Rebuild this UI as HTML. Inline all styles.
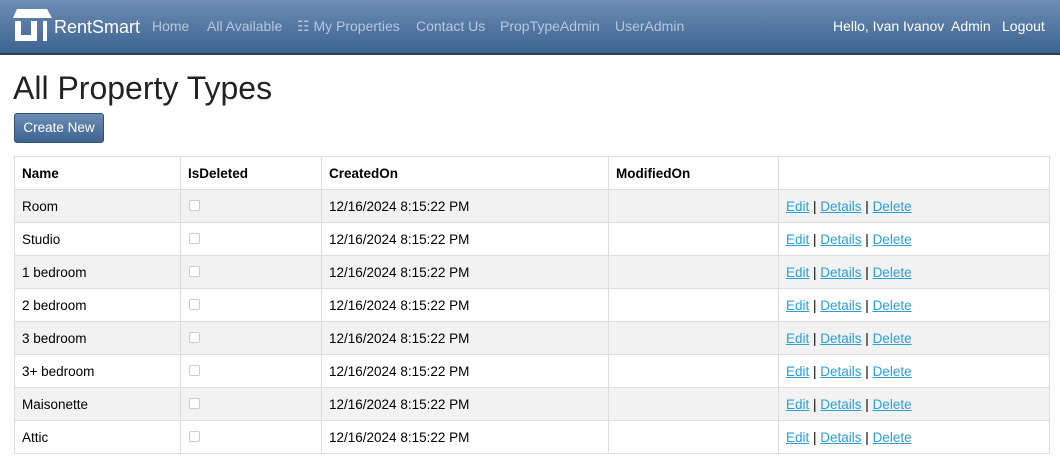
<!DOCTYPE html>
<html><head><style>
body{margin:0;background:#fff;font-family:"Liberation Sans",sans-serif;color:#000;width:1060px;height:472px;overflow:hidden}
.nav{height:53px;background:linear-gradient(#6c8db4,#3d6391);border-bottom:2px solid #2e3e52;position:relative;color:#fff}
.nav a{position:absolute;top:18px;font-size:14px;color:#b8c7da;text-decoration:none}
.nav .r{color:#fff}
h1{position:absolute;left:13px;top:70px;margin:0;font-weight:normal;font-size:32px;color:#222}
.btn{position:absolute;left:14px;top:113px;width:88px;height:28px;border:1px solid #2f5079;border-radius:3px;background:linear-gradient(#6c8db4,#3d6391);color:#fff;font-size:13.5px;line-height:28px;text-align:center}
table{position:absolute;left:14px;top:156px;border-collapse:collapse;width:1036px;font-size:13.5px}
td,th{border:1px solid #ddd;height:32px;padding:0 7px;text-align:left;vertical-align:middle}
th{font-weight:bold}
tr:nth-child(even) td{background:#f2f2f2}
.cb{display:inline-block;width:9px;height:9px;border:1px solid #ccc;border-radius:2px;background:#fff;margin-left:1px}
td a{color:#2a9fd6;text-decoration:underline}
</style></head><body>
<div class="nav">
<svg style="position:absolute;left:13px;top:9px" width="40" height="34" viewBox="0 0 40 34"><path d="M4 0h30l5 9H0z" fill="#fff"/><rect x="2" y="12" width="6" height="20" rx="1" fill="#fff"/><rect x="2" y="26" width="22" height="6" rx="1" fill="#fff"/><rect x="18" y="12" width="6" height="20" fill="#fff"/><rect x="30" y="12" width="4" height="20" fill="#fff"/></svg>
<span style="position:absolute;left:54px;top:17px;font-size:18px;color:#fff">RentSmart</span>
<a style="left:152px">Home</a><a style="left:207px">All Available</a><a style="left:297px">☷ My Properties</a><a style="left:416px">Contact Us</a><a style="left:500px">PropTypeAdmin</a><a style="left:615px">UserAdmin</a>
<a class="r" style="left:833px">Hello, Ivan Ivanov</a><a class="r" style="left:951px">Admin</a><a class="r" style="left:1002px">Logout</a>
</div>
<h1>All Property Types</h1>
<div class="btn">Create New</div>
<table>
<tr><th style="width:151px">Name</th><th style="width:126px">IsDeleted</th><th style="width:272px">CreatedOn</th><th style="width:155px">ModifiedOn</th><th></th></tr>
<tr><td>Room</td><td><span class="cb"></span></td><td>12/16/2024 8:15:22 PM</td><td></td><td><a>Edit</a> | <a>Details</a> | <a>Delete</a></td></tr>
<tr><td>Studio</td><td><span class="cb"></span></td><td>12/16/2024 8:15:22 PM</td><td></td><td><a>Edit</a> | <a>Details</a> | <a>Delete</a></td></tr>
<tr><td>1 bedroom</td><td><span class="cb"></span></td><td>12/16/2024 8:15:22 PM</td><td></td><td><a>Edit</a> | <a>Details</a> | <a>Delete</a></td></tr>
<tr><td>2 bedroom</td><td><span class="cb"></span></td><td>12/16/2024 8:15:22 PM</td><td></td><td><a>Edit</a> | <a>Details</a> | <a>Delete</a></td></tr>
<tr><td>3 bedroom</td><td><span class="cb"></span></td><td>12/16/2024 8:15:22 PM</td><td></td><td><a>Edit</a> | <a>Details</a> | <a>Delete</a></td></tr>
<tr><td>3+ bedroom</td><td><span class="cb"></span></td><td>12/16/2024 8:15:22 PM</td><td></td><td><a>Edit</a> | <a>Details</a> | <a>Delete</a></td></tr>
<tr><td>Maisonette</td><td><span class="cb"></span></td><td>12/16/2024 8:15:22 PM</td><td></td><td><a>Edit</a> | <a>Details</a> | <a>Delete</a></td></tr>
<tr><td>Attic</td><td><span class="cb"></span></td><td>12/16/2024 8:15:22 PM</td><td></td><td><a>Edit</a> | <a>Details</a> | <a>Delete</a></td></tr>
</table>
</body></html>
